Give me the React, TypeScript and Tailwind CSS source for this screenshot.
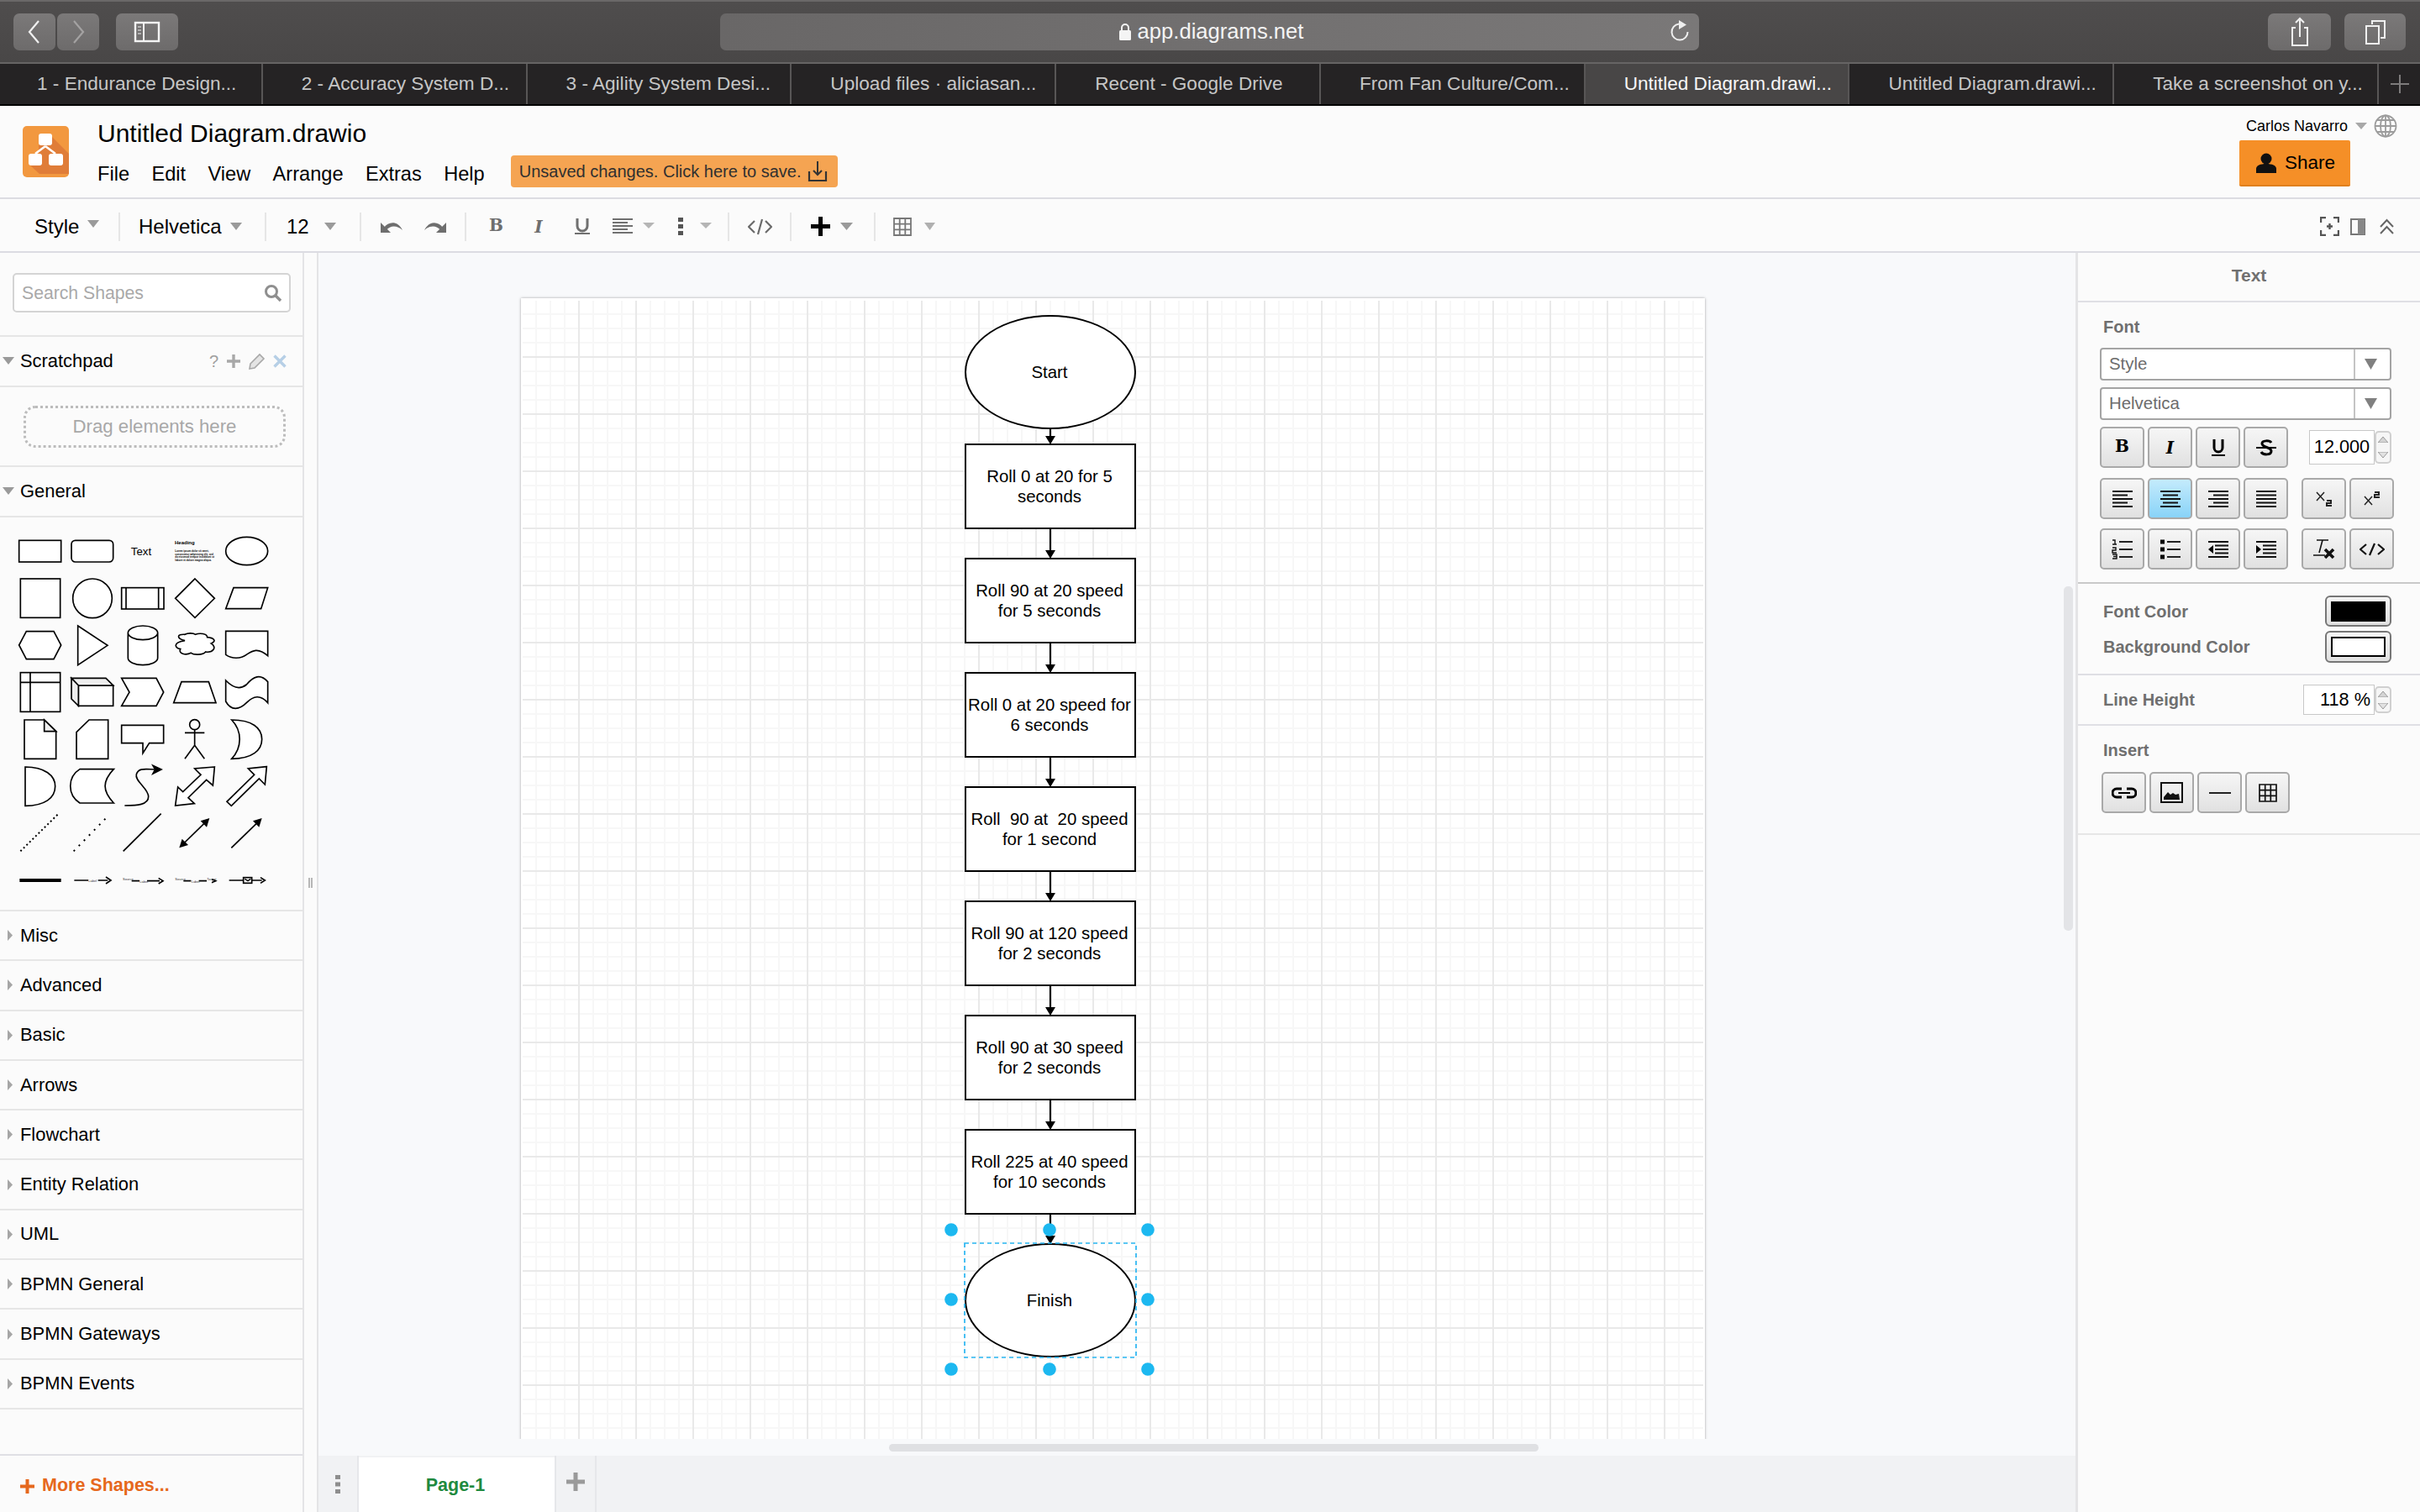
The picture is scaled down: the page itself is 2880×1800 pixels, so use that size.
import React from "react";

const Tri = ({ dir = "d", c = "#9a9a9a", w = 14, h = 9, cls = "" }: { dir?: string; c?: string; w?: number; h?: number; cls?: string }) => (
  <svg width={w} height={h} viewBox="0 0 14 9" preserveAspectRatio="none" className={`shrink-0 ${cls}`}>
    <polygon points={dir === "d" ? "0,0 14,0 7,9" : "0,0 14,4.5 0,9"} fill={c} />
  </svg>
);

const Sep = ({ cls = "" }: { cls?: string }) => <div className={`w-[2px] h-[34px] bg-[#e6e6e6] shrink-0 ${cls}`} />;

const ChromeBtn = ({ cls, children }: { cls: string; children: React.ReactNode }) => (
  <div className={`h-[44px] rounded-[7px] bg-gradient-to-b from-[#7b7979] to-[#6d6b6b] flex items-center justify-center shrink-0 ${cls}`}>{children}</div>
);

const tabs = [
  "1 - Endurance Design...",
  "2 - Accuracy System D...",
  "3 - Agility System Desi...",
  "Upload files · aliciasan...",
  "Recent - Google Drive",
  "From Fan Culture/Com...",
  "Untitled Diagram.drawi...",
  "Untitled Diagram.drawi...",
  "Take a screenshot on y...",
];

const BrowserBar = () => (
  <div className="h-[76px] shrink-0 flex items-start pt-[14px] pl-[16px] bg-gradient-to-b from-[#4f4d4d] to-[#494747] border-t-[2px] border-b-[2px] border-t-[#6a6868] border-b-[#666464] relative box-border">
    <ChromeBtn cls="w-[50px]">
      <svg width="18" height="30" viewBox="0 0 18 30"><path d="M14 2 3 15 14 28" fill="none" stroke="#f0f0f0" strokeWidth="2.2" /></svg>
    </ChromeBtn>
    <ChromeBtn cls="w-[50px] ml-[2px]">
      <svg width="18" height="30" viewBox="0 0 18 30"><path d="M4 2 15 15 4 28" fill="none" stroke="#a4a2a2" strokeWidth="2.2" /></svg>
    </ChromeBtn>
    <ChromeBtn cls="w-[74px] ml-[20px]">
      <svg width="32" height="26" viewBox="0 0 32 26">
        <rect x="2" y="2" width="28" height="22" fill="none" stroke="#f4f4f4" strokeWidth="2.4" />
        <line x1="12" y1="2" x2="12" y2="24" stroke="#f4f4f4" strokeWidth="2" />
        <path d="M5 7h4M5 11h4M5 15h4" stroke="#c8c8c8" strokeWidth="1.6" />
      </svg>
    </ChromeBtn>
    <div className="w-[1165px] ml-[645px] h-[44px] rounded-[7px] bg-gradient-to-r from-[#696767] to-[#7a7878] flex items-center justify-center relative shrink-0 text-[#f4f4f4] text-[25.6px] pl-[3px] box-border">
      <svg width="16" height="22" viewBox="0 0 16 22" className="mr-[7px]">
        <path d="M4 10V6a4 4 0 0 1 8 0v4" fill="none" stroke="#f4f4f4" strokeWidth="2" />
        <rect x="1" y="9" width="14" height="12" rx="1.5" fill="#f4f4f4" />
      </svg>
      <span className="leading-none mb-[1px]">app.diagrams.net</span>
      <svg width="24" height="28" viewBox="0 0 24 28" className="absolute right-[12px] top-[7px]">
        <path d="M12 5.6A9.5 9.5 0 1 0 22.5 15" fill="none" stroke="#eeeeee" strokeWidth="2" />
        <polygon points="12,1 21,6.5 12,12" fill="#eeeeee" />
      </svg>
    </div>
    <ChromeBtn cls="w-[75px] ml-[677px]">
      <svg width="26" height="36" viewBox="0 0 26 36">
        <path d="M8 13H4v21h18V13h-4" fill="none" stroke="#f0f0f0" strokeWidth="2" />
        <path d="M13 24V2M8 7l5-5 5 5" fill="none" stroke="#f0f0f0" strokeWidth="2" />
      </svg>
    </ChromeBtn>
    <ChromeBtn cls="w-[73px] ml-[16px]">
      <svg width="28" height="32" viewBox="0 0 28 32">
        <path d="M10 7V3h15v20h-5" fill="none" stroke="#f0f0f0" strokeWidth="2" />
        <rect x="3" y="9" width="15" height="21" fill="none" stroke="#f0f0f0" strokeWidth="2" />
      </svg>
    </ChromeBtn>
  </div>
);

const TabBar = () => (
  <div className="h-[50px] shrink-0 flex bg-[#252324] border-b-[2px] border-b-black box-border">
    {tabs.map((t, i) => (
      <div key={i} className={`flex-1 min-w-0 flex items-center pl-[46px] first:pl-[44px] border-r-[2px] border-r-[#585656] text-[22.6px] overflow-hidden ${i === 6 ? "bg-[#484646] text-[#f6f6f6]" : "text-[#c6c6c6]"}`}>
        <span className="whitespace-nowrap">{t}</span>
      </div>
    ))}
    <div className="w-[49px] flex items-center justify-center">
      <svg width="24" height="24" viewBox="0 0 24 24"><path d="M12 1v22M1 12h22" stroke="#7d7b7b" strokeWidth="2" /></svg>
    </div>
  </div>
);

const AppHeader = () => (
  <div className="h-[111px] shrink-0 flex bg-[#fbfbfb] border-b-[2px] border-b-[#dcdce2] box-border">
    <svg width="55" height="61" viewBox="0 0 55 61" className="ml-[27px] mt-[24px] shrink-0">
      <rect width="55" height="61" rx="5" fill="#f2983f" />
      <path d="M35 13 55 33V57H20L7 45 19 33 19 23Z" fill="#e07d38" />
      <path d="M27 24 15 33M27 24l12 9" stroke="#fff" strokeWidth="2.6" />
      <rect x="19" y="9" width="16" height="14" rx="3" fill="#fff" />
      <rect x="7" y="33" width="16" height="14" rx="3" fill="#fff" />
      <rect x="31" y="33" width="17" height="14" rx="3" fill="#fff" />
    </svg>
    <div className="ml-[34px] flex flex-col">
      <div className="h-[36px] mt-[15px] flex items-center text-[30px] text-black leading-none whitespace-nowrap">Untitled Diagram.drawio</div>
      <div className="flex items-center mt-[8px]">
        <div className="flex gap-[26.4px] text-[23.6px] text-black leading-none mt-[7px]">
          <span>File</span><span>Edit</span><span>View</span><span>Arrange</span><span>Extras</span><span>Help</span>
        </div>
        <div className="ml-[31px] h-[38px] w-[389px] rounded-[4px] bg-[#f5a452] text-[#303030] text-[20px] flex items-center pl-[10px] whitespace-nowrap">
          Unsaved changes. Click here to save.
          <svg width="24" height="26" viewBox="0 0 24 26" className="ml-[8px]">
            <path d="M2 13v11h20V13" fill="none" stroke="#333" strokeWidth="2.2" />
            <path d="M12 1v16M7 12l5 5 5-5" fill="none" stroke="#333" strokeWidth="2" />
          </svg>
        </div>
      </div>
    </div>
    <div className="ml-auto w-[215px] pr-[26px] pt-[10px] flex flex-col">
      <div className="h-[27px] flex items-center text-[18px] text-black leading-none whitespace-nowrap pl-[8px]">
        <span>Carlos Navarro</span>
        <Tri cls="ml-[9px]" w={14} h={8} c="#a8a8a8" />
        <svg width="28" height="28" viewBox="0 0 28 28" className="ml-[8px]">
          <g fill="none" stroke="#9c9c9c" strokeWidth="1.8">
            <circle cx="14" cy="14" r="12.5" />
            <ellipse cx="14" cy="14" rx="6" ry="12.5" />
            <path d="M14 1v26M1.5 14h25M4 7h20M4 21h20" />
          </g>
        </svg>
      </div>
      <div className="mt-[4px] w-[132px] h-[55px] rounded-[2px] bg-[#f58f27] border-b-[2px] border-b-[#e07f1c] flex items-center text-[22.5px] text-black box-border">
        <svg width="26" height="26" viewBox="0 0 26 26" className="ml-[19px]">
          <circle cx="13" cy="8" r="6.5" fill="#111" />
          <path d="M1 25v-5c0-4 5-6 12-6s12 2 12 6v5z" fill="#111" />
        </svg>
        <span className="ml-[9px]">Share</span>
      </div>
    </div>
  </div>
);

const UndoGlyph = ({ flip = false, cls = "" }: { flip?: boolean; cls?: string }) => (
  <svg width="27" height="15" viewBox="0 0 27 15" className={`${flip ? "-scale-x-100" : ""} ${cls}`}>
    <polygon points="0,3 0,15 12,15" fill="#6e6e6e" />
    <path d="M4 9C9 2 20 0 26 12C20 6 11 6 7 12Z" fill="#6e6e6e" />
  </svg>
);

const Toolbar = () => (
  <div className="h-[64px] shrink-0 flex items-center pl-[41px] pr-[30px] pt-[3px] bg-[#fbfbfb] border-b-[2px] border-b-[#dcdce2] box-border text-black text-[24px]">
    <span className="w-[53px] leading-none">Style</span>
    <Tri cls="ml-[10px] -mt-[6px]" />
    <Sep cls="ml-[23px]" />
    <span className="ml-[22px] w-[100px] leading-none">Helvetica</span>
    <Tri cls="ml-[9px]" />
    <Sep cls="ml-[27px]" />
    <span className="ml-[24px] w-[27px] leading-none">12</span>
    <Tri cls="ml-[18px]" />
    <Sep cls="ml-[28px]" />
    <UndoGlyph cls="ml-[23px]" />
    <UndoGlyph flip cls="ml-[24px]" />
    <Sep cls="ml-[22px]" />
    <span className="ml-[27px] w-[16px] font-['DejaVu_Serif'] font-bold text-[20px] text-[#6e6e6e] leading-none -mt-[3px]">B</span>
    <span className="ml-[33px] w-[20px] font-['DejaVu_Serif'] italic font-bold text-[20px] text-[#6e6e6e] leading-none text-center">I</span>
    <svg width="18" height="19" viewBox="0 0 18 19" className="ml-[33px]"><path d="M3 0v9a6 6 0 0 0 12 0V0" fill="none" stroke="#707070" strokeWidth="3" /><path d="M0 18h18" stroke="#707070" strokeWidth="2" /></svg>
    <svg width="25" height="20" viewBox="0 0 25 20" className="ml-[27px]"><path d="M0 1h24M0 5h18M0 9h24M0 13h18M0 17h24" stroke="#707070" strokeWidth="1.8" /></svg>
    <Tri cls="ml-[11px] -mt-[2px]" c="#b5b5b5" h={7} />
    <svg width="6" height="21" viewBox="0 0 6 21" className="ml-[28px]"><rect width="6" height="5" fill="#555" /><rect y="8" width="6" height="5" fill="#555" /><rect y="16" width="6" height="5" fill="#555" /></svg>
    <Tri cls="ml-[20px] -mt-[2px]" c="#b5b5b5" h={7} />
    <Sep cls="ml-[19px]" />
    <svg width="29" height="20" viewBox="0 0 29 20" className="ml-[22px]"><path d="M8 3 1 10l7 7M21 3l7 7-7 7M17 1 12 19" fill="none" stroke="#6a6a6a" strokeWidth="2.2" /></svg>
    <Sep cls="ml-[21px]" />
    <svg width="23" height="23" viewBox="0 0 23 23" className="ml-[23px]"><path d="M11.5 0v23M0 11.5h23" stroke="#000" strokeWidth="5" /></svg>
    <Tri cls="ml-[12px]" w={15} />
    <Sep cls="ml-[25px]" />
    <svg width="22" height="22" viewBox="0 0 22 22" className="ml-[21px]"><path d="M1 1h20v20H1zM1 7.7h20M1 14.3h20M7.7 1v20M14.3 1v20" fill="none" stroke="#777" strokeWidth="1.8" /></svg>
    <Tri cls="ml-[15px]" w={13} c="#b0b0b0" />
    <svg width="23" height="23" viewBox="0 0 23 23" className="ml-auto"><path d="M1 7V1h6M16 1h6v6M22 16v6h-6M7 22H1v-6M8 11.5h7M11.5 8v7" fill="none" stroke="#555" strokeWidth="2.4" /></svg>
    <svg width="18" height="20" viewBox="0 0 18 20" className="ml-[13px]"><rect x="1" y="1" width="16" height="18" fill="none" stroke="#777" strokeWidth="2" /><rect x="9" y="1" width="8" height="18" fill="#888" /></svg>
    <svg width="19" height="20" viewBox="0 0 19 20" className="ml-[16px]"><path d="m2 10 7.5-8L17 10M2 18l7.5-8 7.5 8" fill="none" stroke="#666" strokeWidth="2" /></svg>
  </div>
);

const Palette = () => (
  <svg width="360" height="467" viewBox="0 -12 1080 1401" className="block shrink-0">
    <g fill="#fff" stroke="#000" strokeWidth="5">
      <rect x="68" y="70" width="150" height="77" />
      <rect x="255" y="70" width="149" height="77" rx="14" />
      <ellipse cx="881" cy="108" rx="75" ry="50" />
      <rect x="73" y="207" width="142" height="139" />
      <circle cx="330" cy="277" r="70" />
      <rect x="434" y="239" width="151" height="76" />
      <path d="M450 239v76M566 239v76" />
      <polygon points="696,207 766,277 696,346 626,277" />
      <polygon points="806,314 834,239 956,239 932,314" />
      <polygon points="68,444 94,395 192,395 218,444 192,494 94,494" />
      <polygon points="278,375 384,445 278,515" />
      <path d="M457 400v90a53 25 0 0 0 106 0v-90a53 25 0 0 0-106 0a53 25 0 0 0 106 0" />
      <path d="M660 428c-30-8-30-24 0-22 10-6 30-6 38 0 14-6 42-4 42 10 24 2 34 14 14 22 22 14 6 34-20 30-10 12-42 12-52 4-20 10-46 2-38-14-22-4-26-24 16-30z" />
      <path d="M806 394H956V482C920 450 900 465 880 478C860 492 830 495 806 478Z" />
      <rect x="73" y="542" width="142" height="140" />
      <path d="M73 577H215M108 542V682" />
      <rect x="280" y="588" width="124" height="73" />
      <polygon points="255,562 378,562 404,588 280,588" fill="#eee" />
      <polygon points="255,562 280,588 280,661 255,636" fill="#eee" />
      <polygon points="434,562 558,562 584,612 558,661 434,661 462,612" />
      <polygon points="620,650 648,575 745,575 771,650" />
      <path d="M806 570C830 595 855 605 880 585C905 555 930 545 956 575V650C930 620 905 625 880 650C855 675 825 680 806 645Z" />
      <path d="M87 711H158L200 752V850H87Z" />
      <polygon points="158,711 158,752 200,752" fill="#eee" />
      <path d="M318 711H386V850H273V755Z" />
      <path d="M434 730H584V794H533L510 830V794H434Z" />
      <circle cx="695" cy="728" r="18" />
      <path d="M695 746V802M660 757H730M695 802 660 850M695 802 730 850" fill="none" />
      <path d="M827 711C900 711 935 740 935 780C935 820 900 850 827 850C865 810 865 750 827 711Z" />
      <path d="M90 879C160 879 197 910 197 948C197 990 160 1018 90 1018Z" />
      <path d="M285 887H406C365 930 365 965 406 1008H285C240 980 240 915 285 887Z" />
      <path d="M445 1017C490 1017 530 1015 530 985C530 955 480 930 487 905C495 880 520 888 560 888" fill="none" />
      <polygon points="576,888 546,874 554,888 546,903" fill="#000" />
      <polygon points="766,879 695,885 717,907 653,968 635,951 626,1017 694,1010 672,989 737,925 760,945" />
      <polygon points="952,878 886,885 908,907 810,1003 826,1018 925,921 946,942" />
      <path d="M73 1180 207 1048" strokeDasharray="6 9" fill="none" strokeWidth="6" />
      <path d="M263 1180 385 1055" strokeDasharray="6 20" fill="none" strokeWidth="6" />
      <path d="M440 1180 575 1046" fill="none" />
      <path d="M650 1158 738 1072" fill="none" />
      <polygon points="748,1062 716,1072 738,1094" fill="#000" strokeWidth="0" />
      <polygon points="640,1168 672,1158 650,1136" fill="#000" strokeWidth="0" />
      <path d="M826 1168 925 1072" fill="none" />
      <polygon points="935,1062 903,1072 925,1094" fill="#000" strokeWidth="0" />
      <path d="M70 1284H218" strokeWidth="12" fill="none" />
      <path d="M265 1284H315M350 1284H385M378 1272l18 12-18 12" fill="none" />
      <path d="M470 1286H498M525 1286H570M566 1276l16 10-16 10" fill="none" />
      <path d="M655 1286H682M710 1286H738M756 1280l14 6-14 6" fill="none" />
      <path d="M818 1284H868M900 1284H935M930 1274l16 10-16 10" fill="none" />
      <rect x="869" y="1274" width="30" height="20" fill="#fff" />
      <path d="M874 1279l11 7 10-7" strokeWidth="4" fill="none" />
    </g>
    <g fontFamily="Liberation Sans" fill="#000">
      <text x="504" y="122" fontSize="40" textAnchor="middle">Text</text>
      <text x="624" y="85" fontSize="18" fontWeight="700">Heading</text>
      <g fontSize="9" fontWeight="700">
        <text x="625" y="111">Lorem ipsum dolor sit amet,</text>
        <text x="625" y="122">consectetur adipisicing elit, sed</text>
        <text x="625" y="132">do eiusmod tempor incididunt ut</text>
        <text x="625" y="143">labore et dolore magna aliqua.</text>
      </g>
      <g fontSize="12" fill="#333">
        <text x="316" y="1289">Label</text>
        <text x="438" y="1285">Source</text>
        <text x="499" y="1292">Label</text>
        <text x="625" y="1285">Source</text>
        <text x="683" y="1292">Label</text>
        <text x="739" y="1285">Target</text>
      </g>
    </g>
  </svg>
);

const sections = ["Misc", "Advanced", "Basic", "Arrows", "Flowchart", "Entity Relation", "UML", "BPMN General", "BPMN Gateways", "BPMN Events"];

const Sidebar = () => (
  <div className="w-[362px] shrink-0 bg-[#fbfbfb] border-r-[2px] border-r-[#e4e4e6] flex flex-col text-[21.9px] text-black box-border">
    <div className="h-[100px] shrink-0 border-b-[2px] border-b-[#e6e6e6] pt-[24px] pl-[15px] box-border">
      <div className="w-[331px] h-[47px] rounded-[5px] border-[2px] border-[#d4d4d4] bg-white flex items-center pl-[9px] text-[21.2px] text-[#a9a9a9] relative box-border">
        Search Shapes
        <svg width="22" height="22" viewBox="0 0 22 22" className="absolute right-[8px] top-[11px]">
          <circle cx="9" cy="9" r="6.5" fill="none" stroke="#8f8f8f" strokeWidth="3" />
          <path d="m14 14 6 6" stroke="#8f8f8f" strokeWidth="3.4" />
        </svg>
      </div>
    </div>
    <div className="h-[60px] shrink-0 border-b-[2px] border-b-[#e6e6e6] flex items-center pl-[3px] pr-[19px] box-border">
      <Tri cls="-mt-[2px]" />
      <span className="ml-[7px] leading-none">Scratchpad</span>
      <span className="ml-auto text-[20px] text-[#a0a0a0] leading-none">?</span>
      <svg width="18" height="18" viewBox="0 0 18 18" className="ml-[9px]"><path d="M9 1v16M1 9h16" stroke="#a8a8a8" strokeWidth="3.4" /></svg>
      <svg width="20" height="20" viewBox="0 0 20 20" className="ml-[9px]"><path d="M2 13 13 2l5 5L7 18l-6 1z" fill="#e4e4e4" stroke="#a8a8a8" strokeWidth="1.6" /></svg>
      <svg width="16" height="16" viewBox="0 0 16 16" className="ml-[9px]"><path d="m1.5 1.5 13 13M14.5 1.5l-13 13" stroke="#b6cfe6" strokeWidth="3.4" /></svg>
    </div>
    <div className="h-[95px] shrink-0 border-b-[2px] border-b-[#e6e6e6] pt-[22px] pl-[28px] box-border">
      <div className="w-[312px] h-[50px] rounded-[14px] border-[3px] border-dotted border-[#bcbcbc] flex items-center justify-center text-[22.2px] text-[#a8a8a8] box-border">Drag elements here</div>
    </div>
    <div className="h-[60px] shrink-0 border-b-[2px] border-b-[#e6e6e6] flex items-center pl-[3px] box-border">
      <Tri cls="-mt-[2px]" />
      <span className="ml-[7px] leading-none">General</span>
    </div>
    <div className="shrink-0 border-b-[2px] border-b-[#e6e6e6] box-border"><Palette /></div>
    {sections.map((s) => (
      <div key={s} className="h-[59.3px] shrink-0 border-b-[2px] border-b-[#e6e6e6] flex items-center pl-[9px] box-border">
        <Tri dir="r" w={6} h={13} c="#a6a6a6" />
        <span className="ml-[9px] leading-none">{s}</span>
      </div>
    ))}
    <div className="flex-1 border-b-[2px] border-b-[#dfdfe4] box-border" />
    <div className="h-[67px] shrink-0 flex items-center pl-[24px] pt-[5px] text-[21.5px] font-bold text-[#e6681d] box-border">
      <svg width="17" height="17" viewBox="0 0 17 17"><path d="M8.5 0v17M0 8.5h17" stroke="#e6681d" strokeWidth="4" /></svg>
      <span className="ml-[9px] leading-none">More Shapes...</span>
    </div>
  </div>
);

const nodes = [
  "Roll 0 at 20 for 5\nseconds",
  "Roll 90 at 20 speed\nfor 5 seconds",
  "Roll 0 at 20 speed for\n6 seconds",
  "Roll  90 at  20 speed\nfor 1 second",
  "Roll 90 at 120 speed\nfor 2 seconds",
  "Roll 90 at 30 speed\nfor 2 seconds",
  "Roll 225 at 40 speed\nfor 10 seconds",
];

const Edge = ({ h }: { h: number }) => (
  <svg width="204" height={h} viewBox={`0 0 204 ${h}`} className="block shrink-0 -my-px relative">
    <line x1="102" y1="0" x2="102" y2={h - 6} stroke="#000" strokeWidth="2.2" />
    <polygon points={`96,${h - 10} 108,${h - 10} 102,${h}`} fill="#000" />
  </svg>
);

const Canvas = () => (
  <div className="flex-1 min-w-0 flex flex-col">
    <div className="flex-1 min-h-0 bg-[#f8f9fb] relative overflow-hidden border-l-[2px] border-l-[#e4e4e6] box-border">
      <div className="h-[1412px] pt-[54px] pl-[241px] overflow-hidden box-border">
        <div className="w-[1409px] h-[1400px] bg-white shadow-[0_0_3px_rgba(0,0,0,0.35)] relative">
          <svg width="1409" height="1400" className="absolute inset-0">
            <defs>
              <pattern id="g" x="2" y="3" width="68" height="68" patternUnits="userSpaceOnUse">
                <path d="M16 0v68M33 0v68M50 0v68M0 16h68M0 33h68M0 50h68" stroke="#f7f7f7" strokeWidth="2" fill="none" />
                <path d="M67 0v68M0 67h68" stroke="#e9e9e9" strokeWidth="2" fill="none" />
              </pattern>
            </defs>
            <rect x="2" y="3" width="1405" height="1397" fill="url(#g)" />
          </svg>
          <div className="absolute left-[528px] top-[20px] w-[204px] flex flex-col text-[20.4px] leading-[24px] text-black text-center">
            <div className="h-[136px] rounded-[50%] border-[2px] border-black bg-white flex items-center justify-center pr-[2px] box-border">Start</div>
            <Edge h={19} />
            {nodes.map((n) => (
              <React.Fragment key={n}>
                <div className="h-[102px] border-[2px] border-black bg-white flex items-center justify-center pr-[2px] whitespace-pre box-border">{n}</div>
                <Edge h={36} />
              </React.Fragment>
            ))}
            <div className="h-[136px] rounded-[50%] border-[2px] border-black bg-white flex items-center justify-center pr-[2px] box-border">Finish</div>
          </div>
          <svg width="1409" height="1400" viewBox="620 355 1409 1400" className="absolute inset-0 pointer-events-none">
            <rect x="1148" y="1480" width="204" height="136" fill="none" stroke="#29b6f2" strokeWidth="1.7" strokeDasharray="5 4" />
            <g fill="#1cb8f0">
              <circle cx="1132" cy="1464" r="7.8" />
              <circle cx="1249" cy="1464" r="7.8" />
              <circle cx="1366" cy="1464" r="7.8" />
              <circle cx="1132" cy="1547" r="7.8" />
              <circle cx="1366" cy="1547" r="7.8" />
              <circle cx="1132" cy="1630" r="7.8" />
              <circle cx="1249" cy="1630" r="7.8" />
              <circle cx="1366" cy="1630" r="7.8" />
            </g>
          </svg>
        </div>
      </div>
      <div className="absolute left-[679px] top-[1418px] w-[773px] h-[9px] rounded-[5px] bg-[#dfe0e3]" />
      <div className="absolute right-[3px] top-[397px] w-[11px] h-[410px] rounded-[5px] bg-[#e3e4e7]" />
    </div>
    <div className="h-[67px] shrink-0 bg-[#f1f2f4] border-l-[2px] border-l-[#e4e4e6] flex box-border">
      <div className="w-[48px] border-r-[2px] border-r-[#e6e7ea] flex items-center justify-center box-border">
        <svg width="6" height="22" viewBox="0 0 6 22"><rect width="6" height="5" fill="#8e8e8e" /><rect y="8.5" width="6" height="5" fill="#8e8e8e" /><rect y="17" width="6" height="5" fill="#8e8e8e" /></svg>
      </div>
      <div className="w-[233px] mt-[2px] bg-white flex items-center justify-center text-[21.5px] font-bold text-[#1f8a3f] pr-[3px] pt-[2px] box-border">Page-1</div>
      <div className="w-[50px] border-l-[2px] border-r-[2px] border-l-[#e6e7ea] border-r-[#e6e7ea] flex items-center justify-center pb-[6px] box-border">
        <svg width="24" height="24" viewBox="0 0 24 24"><path d="M12 1v22M1 12h22" stroke="#9a9a9a" strokeWidth="5" /></svg>
      </div>
    </div>
  </div>
);

const FBtn = ({ active = false, children, cls = "" }: { active?: boolean; children?: React.ReactNode; cls?: string }) => (
  <div
    className={`w-[53px] h-[49px] rounded-[5px] border-[2px] border-[#a9a9a9] flex items-center justify-center shrink-0 box-border ${active ? "bg-gradient-to-b from-[#c4ebfc] to-[#88d3f8]" : "bg-gradient-to-b from-[#f6f6f6] to-[#e1e1e1]"} ${cls}`}
  >
    {children}
  </div>
);

const Lines = ({ d }: { d: string }) => (
  <svg width="26" height="22" viewBox="0 0 26 22"><path d={d} fill="none" stroke="#111" strokeWidth="2" /></svg>
);

const Select = ({ label, cls = "" }: { label: string; cls?: string }) => (
  <div className={`w-[347px] h-[39px] rounded-[4px] border-[2px] border-[#a4a4a4] bg-white flex items-center text-[20.4px] text-[#6c6c6c] box-border ${cls}`}>
    <span className="pl-[9px] w-[300px] leading-none">{label}</span>
    <div className="w-[2px] h-full bg-[#c4c4c4]" />
    <Tri cls="ml-[11px]" w={15} h={13} c="#808080" />
  </div>
);

const Spin = ({ cls }: { cls: string }) => (
  <div className={`w-[20px] rounded-[5px] border-[2px] border-[#d0d0d0] flex flex-col items-center justify-around box-border bg-[#f6f6f6] ${cls}`}>
    <svg width="12" height="7" viewBox="0 0 12 7"><polygon points="6,0 12,7 0,7" fill="#d4d4d4" stroke="#9a9a9a" /></svg>
    <svg width="12" height="7" viewBox="0 0 12 7"><polygon points="0,0 12,0 6,7" fill="#e2e2e2" stroke="#9a9a9a" /></svg>
  </div>
);

const Label = ({ children, cls = "" }: { children: React.ReactNode; cls?: string }) => (
  <div className={`text-[20px] leading-none font-bold text-[#6f6f6f] ${cls}`}>{children}</div>
);

const Swatch = ({ children, cls = "" }: { children: React.ReactNode; cls?: string }) => (
  <div className={`w-[79px] rounded-[6px] border-[2px] border-[#767676] bg-gradient-to-b from-[#f5f5f5] to-[#e0e0e0] flex items-center justify-center box-border ${cls}`}>{children}</div>
);

const RightPanel = () => (
  <div className="w-[410px] shrink-0 bg-[#fbfbfb] border-l-[3px] border-l-[#e4e4e6] flex flex-col box-border">
    <div className="h-[59px] shrink-0 border-b-[2px] border-b-[#dfdfe4] flex items-center justify-center text-[21px] font-bold text-[#707070] pb-[3px] box-border">Text</div>
    <div className="h-[335px] shrink-0 border-b-[2px] border-b-[#c9c9c9] pl-[26px] box-border">
      <Label cls="pl-[4px] pt-[19px]">Font</Label>
      <Select label="Style" cls="mt-[15px]" />
      <Select label="Helvetica" cls="mt-[8px]" />
      <div className="flex items-center gap-[4px] mt-[8px]">
        <FBtn><span className="font-['DejaVu_Serif'] font-bold text-[20px] text-black leading-none -mt-[4px]">B</span></FBtn>
        <FBtn><span className="font-['DejaVu_Serif'] italic font-bold text-[20px] text-black leading-none">I</span></FBtn>
        <FBtn><svg width="18" height="22" viewBox="0 0 18 22"><path d="M4 1v10a5 5 0 0 0 10 0V1" fill="none" stroke="#000" strokeWidth="3" /><path d="M1 20h16" stroke="#000" strokeWidth="2" /></svg></FBtn>
        <FBtn><svg width="24" height="24" viewBox="0 0 24 24"><path d="M18 6c-2-3-11-3-11 1 0 5 11 4 11 9 0 5-10 5-12 1" fill="none" stroke="#000" strokeWidth="3" /><path d="M0 12h24" stroke="#000" strokeWidth="2" /></svg></FBtn>
        <div className="ml-[21px] w-[78px] h-[41px] border-[1.5px] border-[#c8c8c8] bg-white flex items-center justify-center text-[21.7px] text-black box-border overflow-hidden">12.000</div>
        <Spin cls="-ml-[4px] h-[39px]" />
      </div>
      <div className="flex gap-[4px] mt-[12px]">
        <FBtn><Lines d="M1 2h24M1 6.5h18M1 11h24M1 15.5h18M1 20h24" /></FBtn>
        <FBtn active><Lines d="M1 2h24M4 6.5h18M1 11h24M4 15.5h18M1 20h24" /></FBtn>
        <FBtn><Lines d="M1 2h24M7 6.5h18M1 11h24M7 15.5h18M1 20h24" /></FBtn>
        <FBtn><Lines d="M1 2h24M1 6.5h24M1 11h24M1 15.5h24M1 20h24" /></FBtn>
        <FBtn cls="ml-[12px]"><svg width="20" height="18" viewBox="0 0 20 18"><path d="m1 1 9 10M10 1 1 11" stroke="#222" strokeWidth="1.5" /><path d="M13 11h5v3h-5v3h6" fill="none" stroke="#222" strokeWidth="2" /></svg></FBtn>
        <FBtn><svg width="20" height="18" viewBox="0 0 20 18"><path d="m1 6 9 10M10 6l-9 10" stroke="#222" strokeWidth="1.5" /><path d="M13 1h5v3h-5v3h6" fill="none" stroke="#222" strokeWidth="2" /></svg></FBtn>
      </div>
      <div className="flex gap-[4px] mt-[11px]">
        <FBtn><svg width="26" height="24" viewBox="0 0 26 24"><path d="M9 3h16M9 12h16M9 21h16" stroke="#222" strokeWidth="2" /><path d="M1 1h3v5M1 6h5M1 10h4v3H1v3h5M1 18h5v5H1M2 20.5h4" fill="none" stroke="#111" strokeWidth="1.4" /></svg></FBtn>
        <FBtn><svg width="26" height="24" viewBox="0 0 26 24"><path d="M9 3h16M9 12h16M9 21h16" stroke="#222" strokeWidth="2" /><rect x="1" y="0.5" width="5" height="5" /><rect x="1" y="9.5" width="5" height="5" /><rect x="1" y="18.5" width="5" height="5" /></svg></FBtn>
        <FBtn><svg width="26" height="22" viewBox="0 0 26 22"><path d="M1 2h24M9 6.5h16M9 11h16M9 15.5h16M1 20h24" stroke="#111" strokeWidth="2" /><polygon points="1,11 7,6 7,16" /></svg></FBtn>
        <FBtn><svg width="26" height="22" viewBox="0 0 26 22"><path d="M1 2h24M9 6.5h16M9 11h16M9 15.5h16M1 20h24" stroke="#111" strokeWidth="2" /><polygon points="7,11 1,6 1,16" /></svg></FBtn>
        <FBtn cls="ml-[12px]"><svg width="28" height="26" viewBox="0 0 28 26"><path d="M5 2h14M12 2 8 17M1 20h14" fill="none" stroke="#111" strokeWidth="1.6" /><path d="m15 13 10 10M25 13 15 23" stroke="#111" strokeWidth="3.6" /></svg></FBtn>
        <FBtn><svg width="30" height="16" viewBox="0 0 30 16"><path d="M8 2 1 8l7 6M22 2l7 6-7 6M18 1l-6 14" fill="none" stroke="#111" strokeWidth="2.2" /></svg></FBtn>
      </div>
    </div>
    <div className="h-[109px] shrink-0 border-b-[2px] border-b-[#dfdfe4] pl-[30px] pr-[34px] box-border">
      <div className="h-[37px] mt-[14px] flex items-center justify-between">
        <Label>Font Color</Label>
        <Swatch cls="h-[37px]"><div className="w-[65px] h-[24px] bg-black" /></Swatch>
      </div>
      <div className="h-[38px] mt-[5px] flex items-center justify-between">
        <Label>Background Color</Label>
        <Swatch cls="h-[38px]"><div className="w-[65px] h-[24px] bg-white border-[2px] border-black box-border" /></Swatch>
      </div>
    </div>
    <div className="h-[60px] shrink-0 border-b-[2px] border-b-[#dfdfe4] flex items-center pl-[30px] pr-[34px] box-border">
      <Label>Line Height</Label>
      <div className="ml-auto w-[85px] h-[36px] border-[1.5px] border-[#c8c8c8] bg-white flex items-center justify-end pr-[4px] text-[21.7px] text-black box-border">118 %</div>
      <Spin cls="h-[32px]" />
    </div>
    <div className="h-[130px] shrink-0 border-b-[2px] border-b-[#e6e6e6] box-border">
      <Label cls="pl-[30px] pt-[19px]">Insert</Label>
      <div className="flex gap-[4px] pl-[28px] mt-[16px]">
        <FBtn><svg width="30" height="14" viewBox="0 0 30 14"><path d="M12 2H6a5 5 0 0 0 0 10h6M18 2h6a5 5 0 0 1 0 10h-6" fill="none" stroke="#000" strokeWidth="3" /><path d="M8 7h14" stroke="#000" strokeWidth="2" /></svg></FBtn>
        <FBtn><svg width="27" height="25" viewBox="0 0 27 25"><rect x="1" y="1" width="25" height="23" fill="none" stroke="#111" strokeWidth="2" /><path d="M4 21v-3l5-6 3 3 3-2 3 2 4-1 1 7z" fill="#111" /></svg></FBtn>
        <FBtn><div className="w-[26px] h-[2px] bg-[#222]" /></FBtn>
        <FBtn><svg width="22" height="22" viewBox="0 0 22 22"><path d="M1 1h20v20H1zM1 7.7h20M1 14.3h20M7.7 1v20M14.3 1v20" fill="none" stroke="#111" strokeWidth="1.7" /></svg></FBtn>
      </div>
    </div>
  </div>
);

export default function App() {
  return (
    <div className="w-[2880px] h-[1800px] flex flex-col overflow-hidden bg-[#fbfbfb] font-['Liberation_Sans',Arial,sans-serif]">
      <BrowserBar />
      <TabBar />
      <AppHeader />
      <Toolbar />
      <div className="flex-1 min-h-0 flex">
        <Sidebar />
        <div className="w-[15px] shrink-0 bg-[#fbfbfb] flex items-center justify-center">
          <svg width="6" height="12" viewBox="0 0 6 12"><path d="M1 0v12M4 0v12" stroke="#9a9a9a" strokeWidth="1.4" /></svg>
        </div>
        <Canvas />
        <RightPanel />
      </div>
    </div>
  );
}
